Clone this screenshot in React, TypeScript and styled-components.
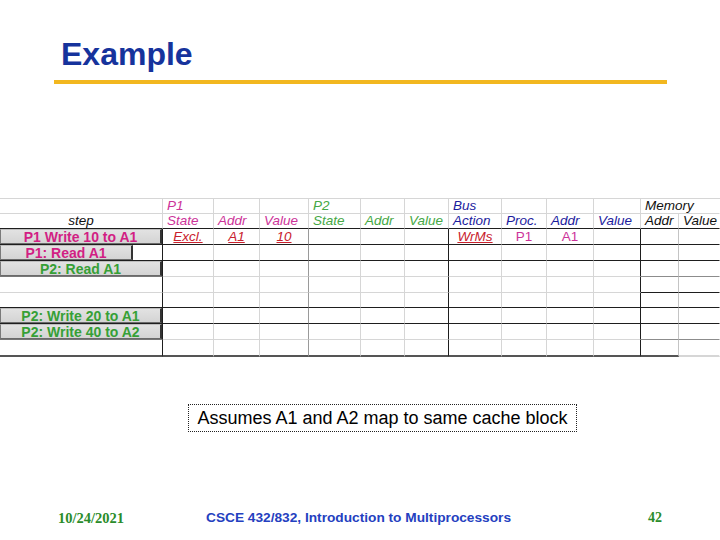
import React from "react";
import styled, { createGlobalStyle } from "styled-components";

const Global = createGlobalStyle`
  html, body { margin: 0; padding: 0; background: #ffffff; }
  body { font-family: "Liberation Sans", Arial, sans-serif; }
`;

const DARK = "#1e1e1e";
const LIGHT = "#d6d6d6";
const MID = "#8c8c8c";
const BTM = "#555555";

const MAGENTA = "#cc3399";
const MAGENTA_BOLD = "#d21f84";
const GREEN = "#45a845";
const GREEN_BOLD = "#36a036";
const NAVY = "#1c1c9e";
const RED = "#c8202c";

const COLS = [163, 51, 46, 49, 52, 44, 44, 53, 45, 47, 47, 38, 41];
const V_RIGHT = [DARK, LIGHT, LIGHT, "#9a9a9a", LIGHT, LIGHT, DARK, LIGHT, LIGHT, LIGHT, DARK, "#c4c4c4", "transparent"];

const Page = styled.div`
  width: 720px;
  height: 540px;
  display: flex;
  flex-direction: column;
  background: #ffffff;
  overflow: hidden;
`;

const Title = styled.h1`
  margin: 38px 0 0 61px;
  font: bold 32px/32px "Liberation Sans", Arial, sans-serif;
  color: #16339c;
`;

const Rule = styled.div`
  margin: 10px 0 0 54px;
  width: 613px;
  height: 4px;
  background: #f2b71f;
`;

const Sheet = styled.div`
  margin-top: 114px;
  display: grid;
  grid-template-columns: ${COLS.map((c) => `${c}px`).join(" ")};
  grid-template-rows: 15px 15px 16px 16px 16px 16px 15px 16px 16px 17px;
  border-top: 1px solid ${LIGHT};
  width: 720px;
`;

const Cell = styled.div<{ $r: string; $b: string; $bw?: number; $span?: number; $align?: "left" | "center" }>`
  box-sizing: border-box;
  min-width: 0;
  grid-column: span ${(p) => p.$span ?? 1};
  border-right: 1px solid ${(p) => p.$r};
  border-bottom: ${(p) => p.$bw ?? 1}px solid ${(p) => p.$b};
  display: flex;
  align-items: flex-end;
  justify-content: ${(p) => (p.$align === "left" ? "flex-start" : "center")};
  padding-left: ${(p) => (p.$align === "left" ? "4px" : "0")};
  white-space: nowrap;
  overflow: visible;
`;

const HeadText = styled.span<{ $color: string }>`
  font: italic 13.5px/15px "Liberation Sans", Arial, sans-serif;
  color: ${(p) => p.$color};
`;

const DataText = styled.span<{ $color: string; $mark?: boolean }>`
  font: ${(p) => (p.$mark ? "italic" : "normal")} 13.5px/15px "Liberation Sans", Arial, sans-serif;
  color: ${(p) => p.$color};
  text-decoration: ${(p) => (p.$mark ? "underline" : "none")};
  text-underline-offset: 1px;
  align-self: center;
`;

const StepButton = styled.div<{ $width: string; $color: string }>`
  box-sizing: border-box;
  width: ${(p) => p.$width};
  height: 100%;
  align-self: stretch;
  margin-right: auto;
  background: linear-gradient(#e2e2e2, #d4d4d4);
  border-left: 1px solid #7a7a7a;
  border-top: 1px solid #bdbdbd;
  border-right: 2px solid #333333;
  border-bottom: 1px solid #6a6a6a;
  display: flex;
  align-items: center;
  justify-content: center;
  font: bold 14px/14px "Liberation Sans", Arial, sans-serif;
  color: ${(p) => p.$color};
  white-space: nowrap;
`;

const Note = styled.div`
  box-sizing: border-box;
  margin: 47px 0 0 188px;
  width: 389px;
  height: 28px;
  border: 1px dotted #222222;
  display: flex;
  align-items: center;
  justify-content: center;
  font: 18px/20px "Liberation Sans", Arial, sans-serif;
  color: #000000;
`;

const Footer = styled.div`
  margin-top: 78px;
  padding-left: 58px;
  display: grid;
  grid-template-columns: 148px 442px auto;
  align-items: center;
  height: 16px;
`;

const FootDate = styled.span`
  font: bold 14.5px/16px "Liberation Serif", "Times New Roman", serif;
  color: #2a8c2a;
`;

const FootCourse = styled.span`
  font: bold 13.7px/16px "Liberation Sans", Arial, sans-serif;
  color: #2440c0;
`;

const FootNum = styled.span`
  font: bold 14px/16px "Liberation Serif", "Times New Roman", serif;
  color: #2a8c2a;
`;

type Head = { text?: string; color?: string; span?: number; align?: "left" | "center" };

const HEAD1: Head[] = [
  {},
  { text: "P1", color: MAGENTA },
  {},
  {},
  { text: "P2", color: GREEN },
  {},
  {},
  { text: "Bus", color: NAVY },
  {},
  {},
  {},
  { text: "Memory", color: "#111111", span: 2 },
];

const HEAD2: Head[] = [
  { text: "step", color: "#111111", align: "center" },
  { text: "State", color: MAGENTA },
  { text: "Addr", color: MAGENTA },
  { text: "Value", color: MAGENTA },
  { text: "State", color: GREEN },
  { text: "Addr", color: GREEN },
  { text: "Value", color: GREEN },
  { text: "Action", color: NAVY },
  { text: "Proc.", color: NAVY },
  { text: "Addr", color: NAVY },
  { text: "Value", color: NAVY },
  { text: "Addr", color: "#111111" },
  { text: "Value", color: "#111111" },
];

type Step = { label: string; color: string; width: string } | null;

const STEPS: Step[] = [
  { label: "P1 Write 10 to A1", color: MAGENTA_BOLD, width: "100%" },
  { label: "P1: Read A1", color: MAGENTA_BOLD, width: "133px" },
  { label: "P2: Read A1", color: GREEN_BOLD, width: "100%" },
  null,
  null,
  { label: "P2: Write 20 to A1", color: GREEN_BOLD, width: "100%" },
  { label: "P2: Write 40 to A2", color: GREEN_BOLD, width: "100%" },
  null,
];

// bottom line per row for groups: step, P, Bus, Mem addr, Mem value
type Line = [string, number];
const D: Line = [DARK, 1];
const L: Line = [LIGHT, 1];
const M: Line = [MID, 1];
const S: Line = ["#777777", 1];
const B: Line = [BTM, 2];
const BOTTOMS: Line[][] = [
  [D, D, D, D, D],
  [D, D, D, D, D],
  [S, L, L, M, M],
  [L, L, L, D, D],
  [D, D, D, D, D],
  [D, D, D, D, D],
  [S, L, L, M, M],
  [B, B, B, B, [LIGHT, 2]],
];

const groupOf = (c: number) => (c === 0 ? 0 : c <= 6 ? 1 : c <= 10 ? 2 : c === 11 ? 3 : 4);

type Val = { text: string; color: string; mark?: boolean };
const ROW0: Record<number, Val> = {
  1: { text: "Excl.", color: RED, mark: true },
  2: { text: "A1", color: RED, mark: true },
  3: { text: "10", color: RED, mark: true },
  7: { text: "WrMs", color: RED, mark: true },
  8: { text: "P1", color: MAGENTA },
  9: { text: "A1", color: MAGENTA },
};

export default function App() {
  let col = 0;
  const head1 = HEAD1.map((h, i) => {
    const span = h.span ?? 1;
    col += span;
    return (
      <Cell key={`h1-${i}`} $r={span > 1 ? "transparent" : LIGHT} $b={LIGHT} $span={span} $align="left">
        {h.text && <HeadText $color={h.color!}>{h.text}</HeadText>}
      </Cell>
    );
  });

  const head2 = HEAD2.map((h, i) => (
    <Cell key={`h2-${i}`} $r={i === 12 ? "transparent" : LIGHT} $b={DARK} $align={h.align ?? "left"}>
      <HeadText $color={h.color!}>{h.text}</HeadText>
    </Cell>
  ));

  const rows = STEPS.map((step, r) =>
    COLS.map((_, c) => {
      const [color, width] = BOTTOMS[r][groupOf(c)];
      const val = r === 0 ? ROW0[c] : undefined;
      return (
        <Cell key={`r${r}-${c}`} $r={V_RIGHT[c]} $b={color} $bw={width} $align="center">
          {c === 0 && step && (
            <StepButton $width={step.width} $color={step.color}>
              {step.label}
            </StepButton>
          )}
          {val && (
            <DataText $color={val.color} $mark={val.mark}>
              {val.text}
            </DataText>
          )}
        </Cell>
      );
    })
  );

  return (
    <>
      <Global />
      <Page>
        <Title>Example</Title>
        <Rule />
        <Sheet>
          {head1}
          {head2}
          {rows}
        </Sheet>
        <Note>Assumes A1 and A2 map to same cache block</Note>
        <Footer>
          <FootDate>10/24/2021</FootDate>
          <FootCourse>CSCE 432/832, Introduction to Multiprocessors</FootCourse>
          <FootNum>42</FootNum>
        </Footer>
      </Page>
    </>
  );
}
